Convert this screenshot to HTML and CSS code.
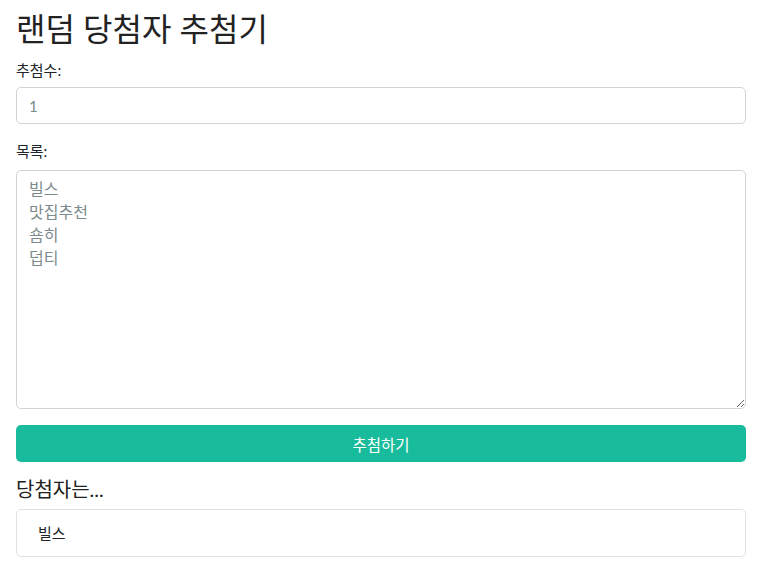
FILE: index.html
```html
<!DOCTYPE html>
<html lang="ko">
<head>
  <meta charset="UTF-8">
  <title>랜덤 당첨자 추첨기</title>
  <meta name="viewport" content="width=device-width,initial-scale=1">
  <link rel="stylesheet" href="styles.css">
</head>
<body>
<main class="wrap">
  <h1 class="title">랜덤 당첨자 추첨기</h1>

  <label class="label" for="count">추첨수:</label>
  <input class="field" id="count" type="text" placeholder="1">

  <label class="label" for="list">목록:</label>
  <textarea class="field area" id="list" placeholder="빌스&#10;맛집추천&#10;숌히&#10;덥티"></textarea>

  <button class="draw" type="button">추첨하기</button>

  <h3 class="result-head">당첨자는...</h3>
  <div class="result">빌스</div>
</main>
</body>
</html>
```

FILE: styles.css
```css
:root {
  --accent: #18bc9c;
  --fg: #212529;
  --muted: #7b8a8b;
  --border: #ced4da;
  --sans: Lato, "Noto Sans CJK KR", "Noto Sans", sans-serif;
}
html, body {
  margin: 0;
  padding: 0;
  background: #fff;
  color: var(--fg);
  font-family: var(--sans);
}
.wrap {
  display: flex;
  flex-direction: column;
  padding: 11px 17px 8px 16px;
}
.title {
  margin: 0;
  font-size: 32px;
  font-weight: 400;
  line-height: 36px;
  color: #222;
}
.label {
  margin-top: 13px;
  font-size: 15px;
  line-height: 21px;
}
.field {
  margin-top: 6px;
  box-sizing: border-box;
  height: 37px;
  padding: 6px 12px;
  border: 1px solid var(--border);
  border-radius: 5px;
  font-family: var(--sans);
  font-size: 15px;
  line-height: 22px;
  color: var(--fg);
  background: #fff;
}
.field::placeholder {
  color: var(--muted);
}
.field + .label {
  margin-top: 17px;
}
.area {
  margin-top: 8px;
  height: 239px;
  resize: vertical;
  font-size: 16px;
  line-height: 23px;
}
.draw {
  margin-top: 16px;
  height: 37px;
  border: 0;
  border-radius: 5px;
  background: var(--accent);
  color: #fff;
  font-family: var(--sans);
  font-size: 15.5px;
}
.result-head {
  margin: 13px 0 0 0;
  font-size: 20px;
  font-weight: 400;
  line-height: 28px;
  color: #222;
}
.result {
  margin-top: 6px;
  box-sizing: border-box;
  height: 48px;
  padding: 12px 21px;
  border: 1px solid #dee2e6;
  border-radius: 5px;
  font-size: 15px;
  line-height: 22px;
}
```
